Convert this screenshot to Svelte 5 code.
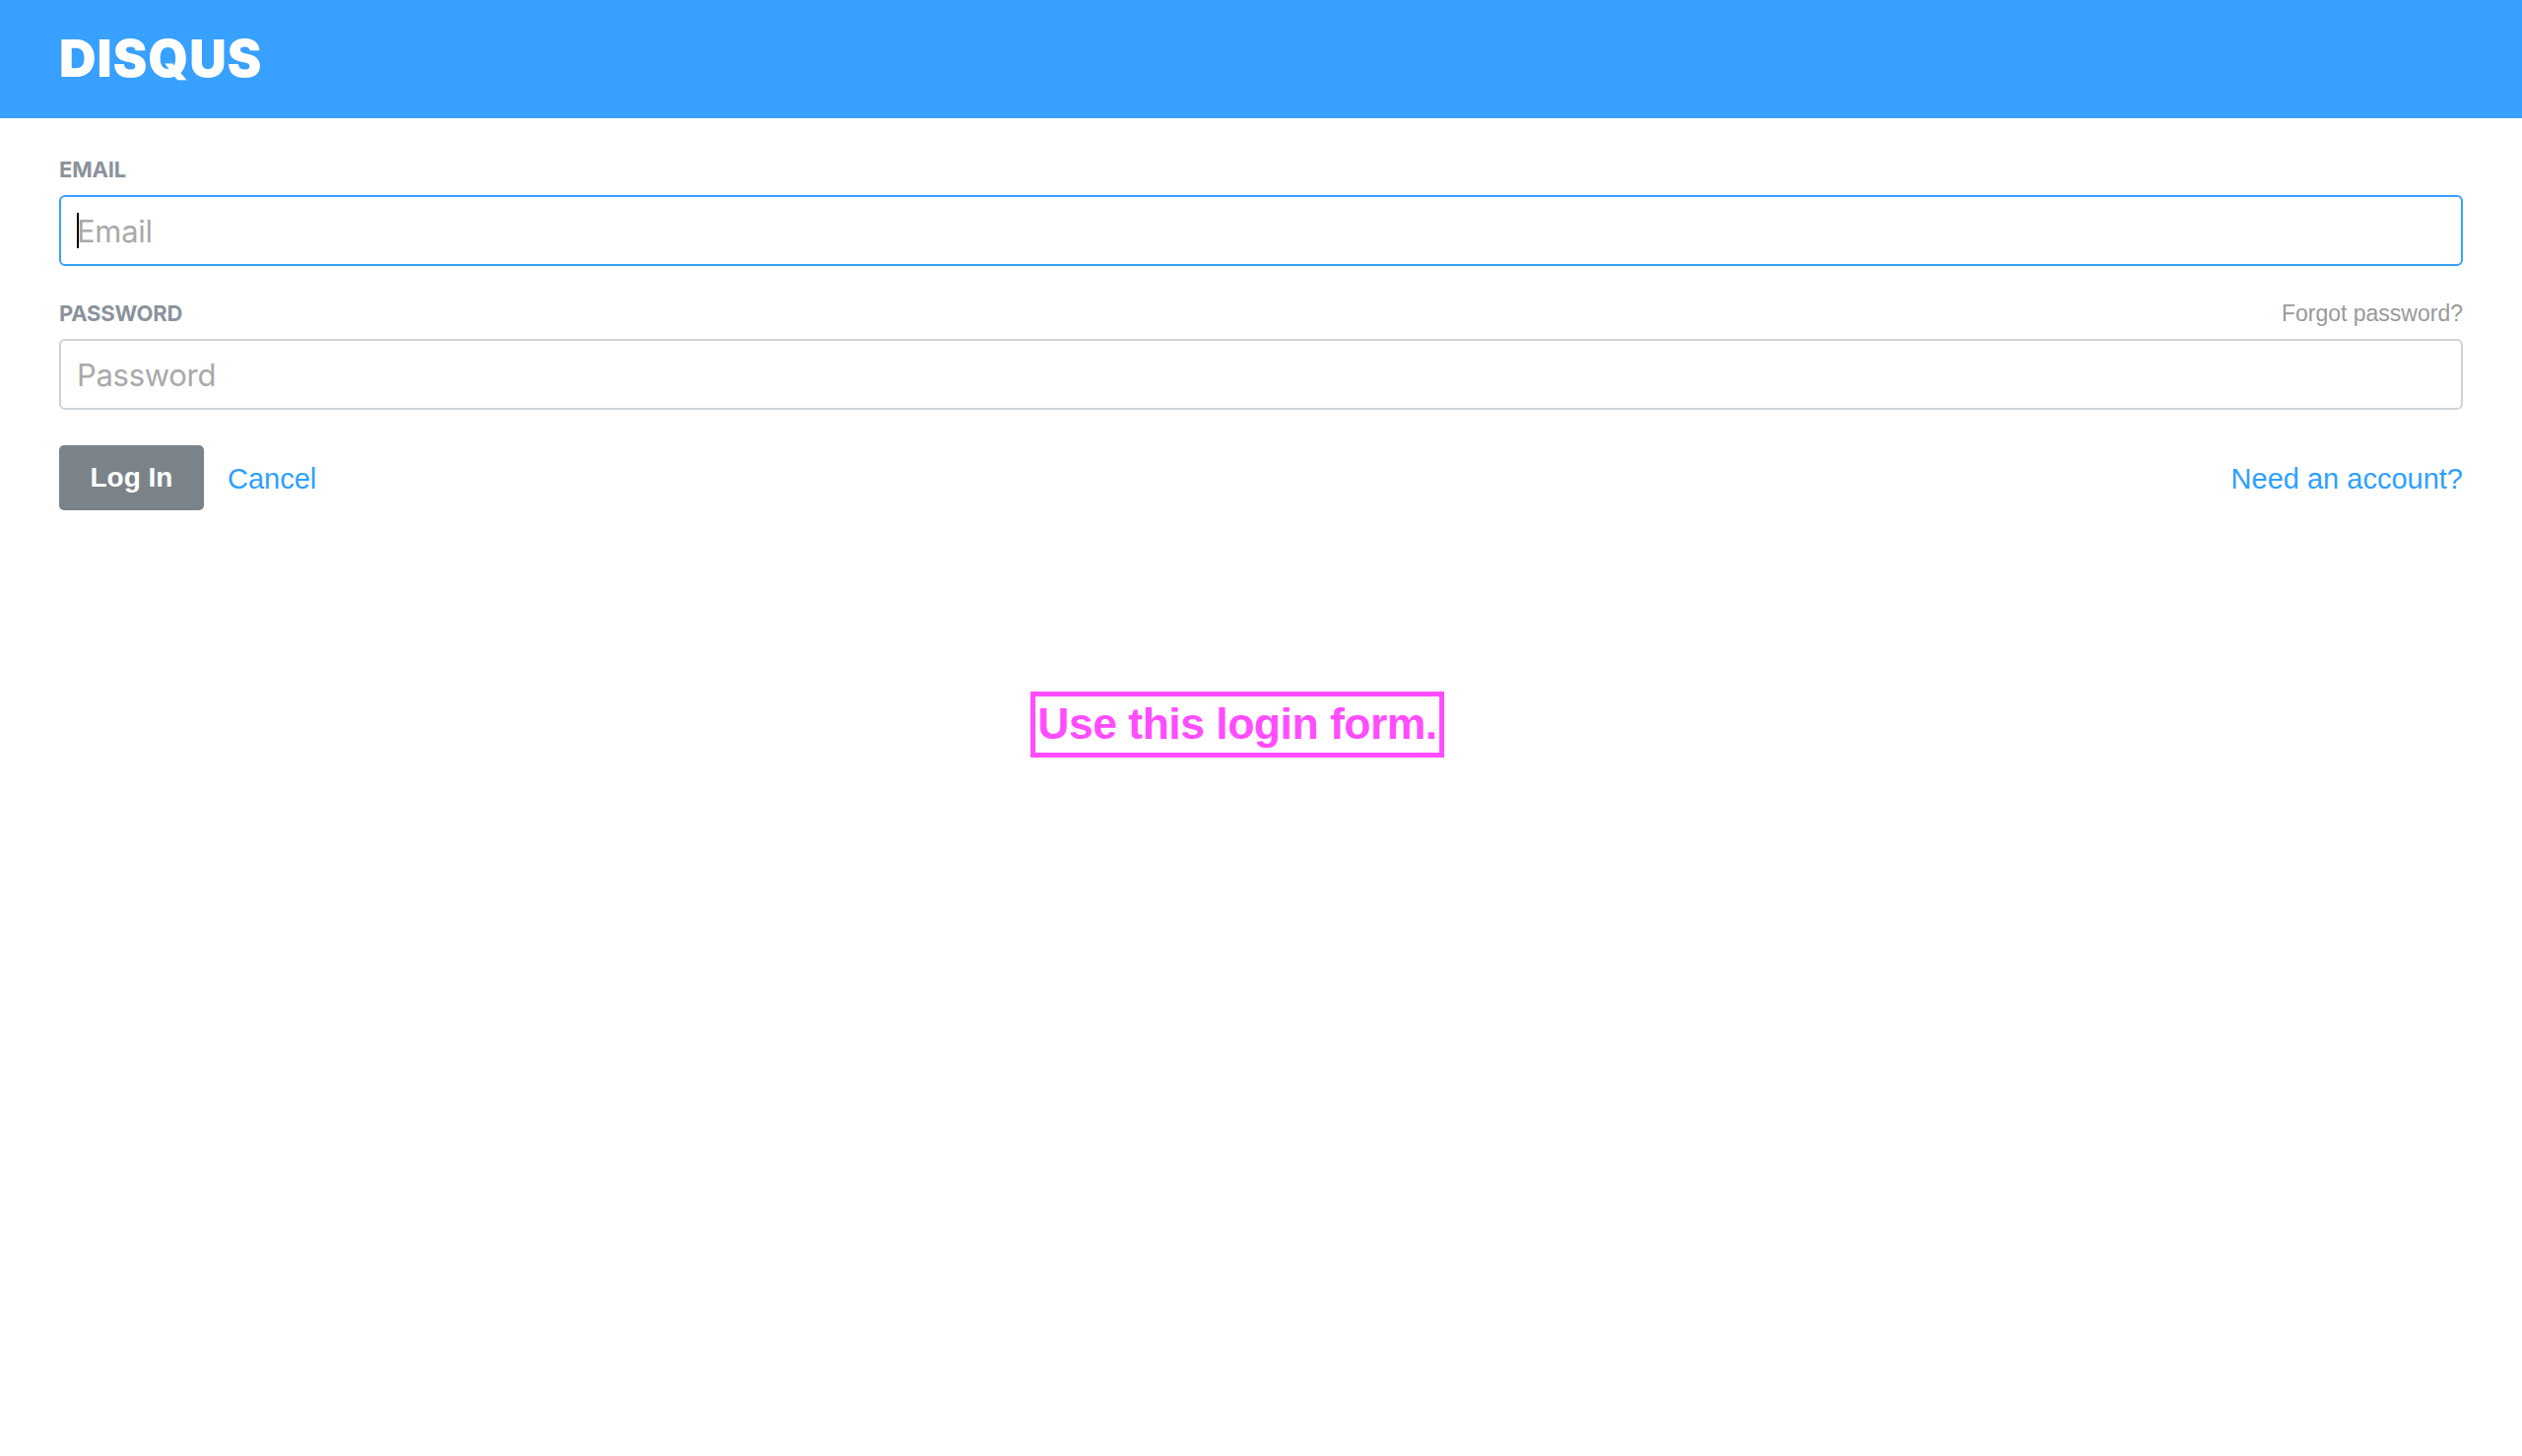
<script>
    let email = $state("");
    let password = $state("");
</script>

<div class="page">
    <header class="topbar">
        <span class="logo">DISQUS</span>
    </header>

    <form class="login" onsubmit={(e) => e.preventDefault()}>
        <div class="field">
            <div class="label-row">
                <label for="email">EMAIL</label>
            </div>
            <div class="input-wrap">
                <input id="email" class="focused" type="text" placeholder="Email" bind:value={email} />
                <span class="caret"></span>
            </div>
        </div>

        <div class="field">
            <div class="label-row">
                <label for="password">PASSWORD</label>
                <a class="forgot" href="#forgot">Forgot password?</a>
            </div>
            <div class="input-wrap">
                <input id="password" type="password" placeholder="Password" bind:value={password} />
            </div>
        </div>

        <div class="actions">
            <button class="submit" type="submit">Log In</button>
            <a class="link" href="#cancel">Cancel</a>
            <a class="link signup" href="#signup">Need an account?</a>
        </div>
    </form>

    <div class="note">Use this login form.</div>
</div>

<style>
    :global(body) {
        margin: 0;
        background: #fff;
    }

    .page {
        position: relative;
        height: 1478px;
        font-family: "Liberation Sans", Arial, sans-serif;
    }

    .topbar {
        height: 120px;
        background: #38a0ff;
        display: flex;
        align-items: center;
        padding: 0 60px;
    }

    .logo {
        font-family: Inter, sans-serif;
        font-weight: 900;
        font-size: 52px;
        line-height: 1;
        color: #fff;
        letter-spacing: 1px;
    }

    .login {
        padding: 38px 60px 0;
    }

    .field {
        margin-bottom: 34px;
    }

    .label-row {
        display: flex;
        justify-content: space-between;
        align-items: center;
        box-sizing: border-box;
        height: 26px;
        padding-top: 2px;
        margin-bottom: 14px;
    }

    label {
        font-family: Inter, sans-serif;
        font-size: 22px;
        font-weight: 700;
        color: #8a939c;
        letter-spacing: -0.2px;
    }

    .forgot {
        font-size: 23px;
        color: #999;
        text-decoration: none;
    }

    .input-wrap {
        position: relative;
    }

    input {
        display: block;
        box-sizing: border-box;
        width: 100%;
        height: 72px;
        padding: 0 16px;
        border: 2px solid #cdd3d8;
        border-radius: 6px;
        font-family: Inter, sans-serif;
        font-size: 31px;
        letter-spacing: -0.3px;
        outline: none;
        background: #fff;
    }

    input.focused {
        border-color: #38a0ff;
    }

    input::placeholder {
        color: #a9a9a9;
        opacity: 1;
    }

    .caret {
        position: absolute;
        left: 18px;
        top: 18px;
        width: 2px;
        height: 36px;
        background: #000;
    }

    .actions {
        display: flex;
        align-items: center;
        padding-top: 2px;
    }

    .submit {
        box-sizing: border-box;
        width: 147px;
        height: 66px;
        border: none;
        border-radius: 5px;
        background: #7b838a;
        color: #fff;
        font-family: "Liberation Sans", Arial, sans-serif;
        font-size: 28px;
        font-weight: 700;
        padding: 0;
    }

    .link {
        color: #2e9fff;
        font-size: 29px;
        padding-top: 2px;
        text-decoration: none;
    }

    .submit + .link {
        margin-left: 24px;
    }

    .signup {
        margin-left: auto;
    }

    .note {
        position: absolute;
        left: 1046px;
        top: 702px;
        box-sizing: border-box;
        width: 420px;
        height: 67px;
        border: 5px solid #ff4dff;
        color: #ff4dff;
        font-size: 44.5px;
        font-weight: 700;
        letter-spacing: -0.5px;
        line-height: 56px;
        text-align: center;
        white-space: nowrap;
    }
</style>
